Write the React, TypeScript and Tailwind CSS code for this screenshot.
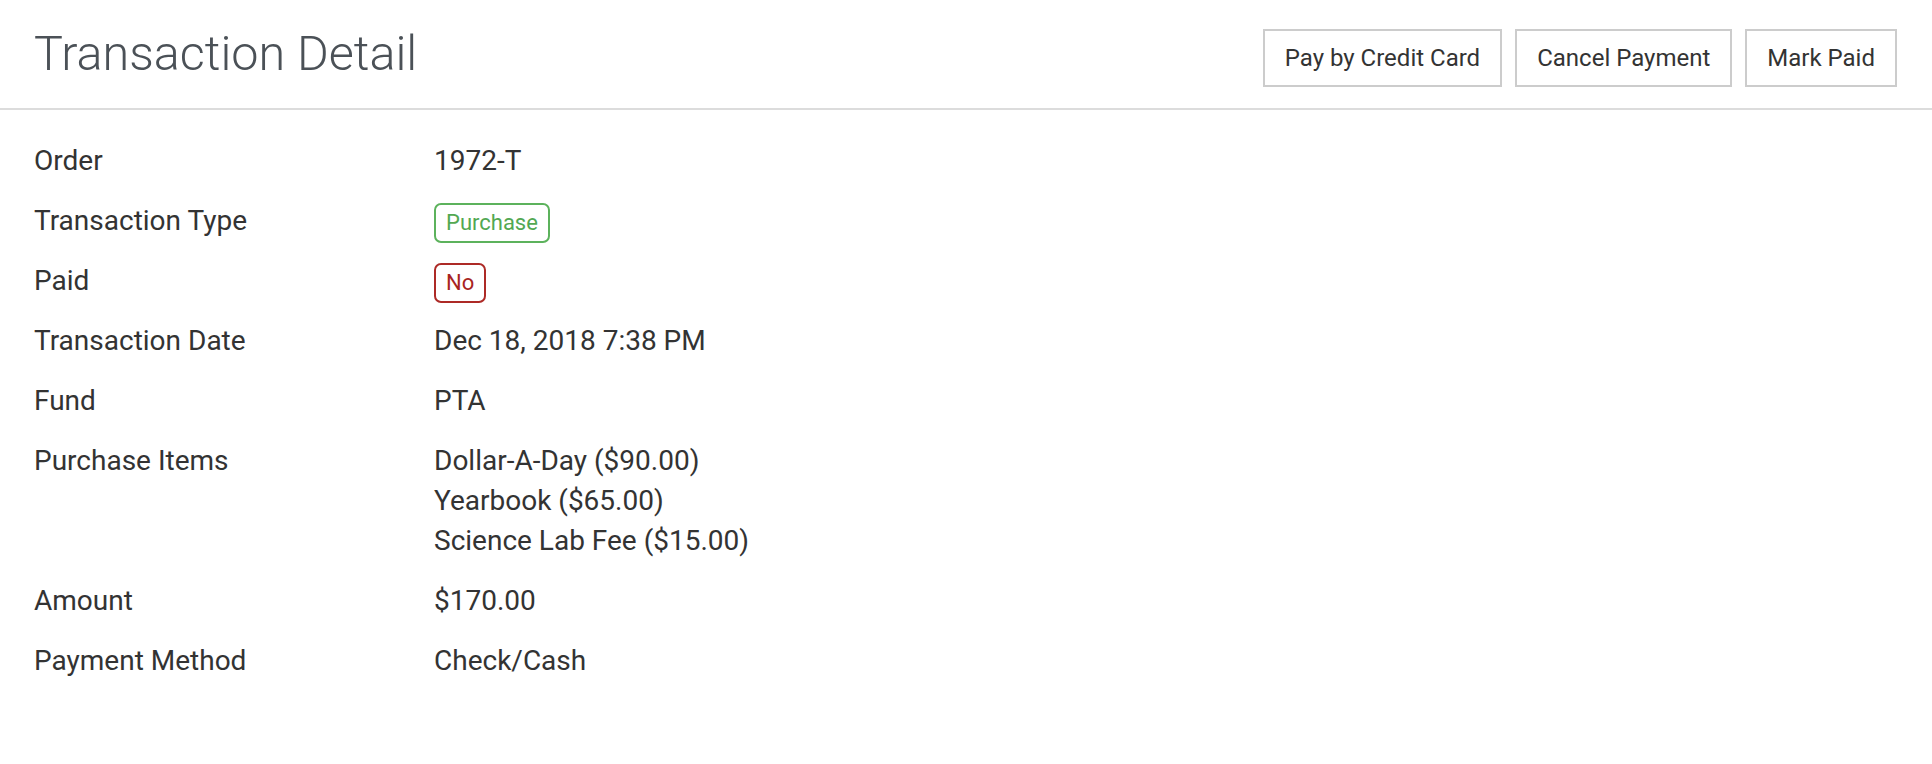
const rows: { label: string; value: React.ReactNode }[] = [
  { label: "Order", value: "1972-T" },
  {
    label: "Transaction Type",
    value: (
      <span className="flex h-[40px] translate-y-[2px] items-center rounded-[7px] border-2 border-[#5cb25c] px-[10px] text-[22px] text-[#52a852]">
        Purchase
      </span>
    ),
  },
  {
    label: "Paid",
    value: (
      <span className="flex h-[40px] translate-y-[2px] items-center rounded-[7px] border-2 border-[#ad2a26] px-[10px] text-[22px] text-[#a8241f]">
        No
      </span>
    ),
  },
  { label: "Transaction Date", value: "Dec 18, 2018 7:38 PM" },
  { label: "Fund", value: "PTA" },
  {
    label: "Purchase Items",
    value: (
      <div className="flex flex-col">
        <span>Dollar-A-Day ($90.00)</span>
        <span>Yearbook ($65.00)</span>
        <span>Science Lab Fee ($15.00)</span>
      </div>
    ),
  },
  { label: "Amount", value: "$170.00" },
  { label: "Payment Method", value: "Check/Cash" },
];

const actions = ["Pay by Credit Card", "Cancel Payment", "Mark Paid"];

export default function App() {
  return (
    <div className="min-h-screen bg-white font-['Roboto','Liberation_Sans',sans-serif] text-[#333]">
      <header className="flex items-start justify-between border-b-2 border-[#dcdcdc] pl-[34px] pr-[35px] pt-[26px] pb-[21px]">
        <h1 className="text-[48.5px] font-light leading-[56px] text-[#4b5157]">Transaction Detail</h1>
        <div className="mt-[3px] flex gap-[13px]">
          {actions.map((a) => (
            <button
              key={a}
              className="border-2 border-[#cccccc] bg-white px-[20px] py-[10px] text-[24px] leading-[34px] text-[#333]"
            >
              {a}
            </button>
          ))}
        </div>
      </header>

      <main className="flex flex-col gap-[20px] pl-[34px] pr-[35px] pt-[31px] text-[28px] leading-[40px]">
        {rows.map((r) => (
          <div key={r.label} className="grid grid-cols-[400px_1fr]">
            <div>{r.label}</div>
            <div className="flex items-start">{r.value}</div>
          </div>
        ))}
      </main>
    </div>
  );
}
